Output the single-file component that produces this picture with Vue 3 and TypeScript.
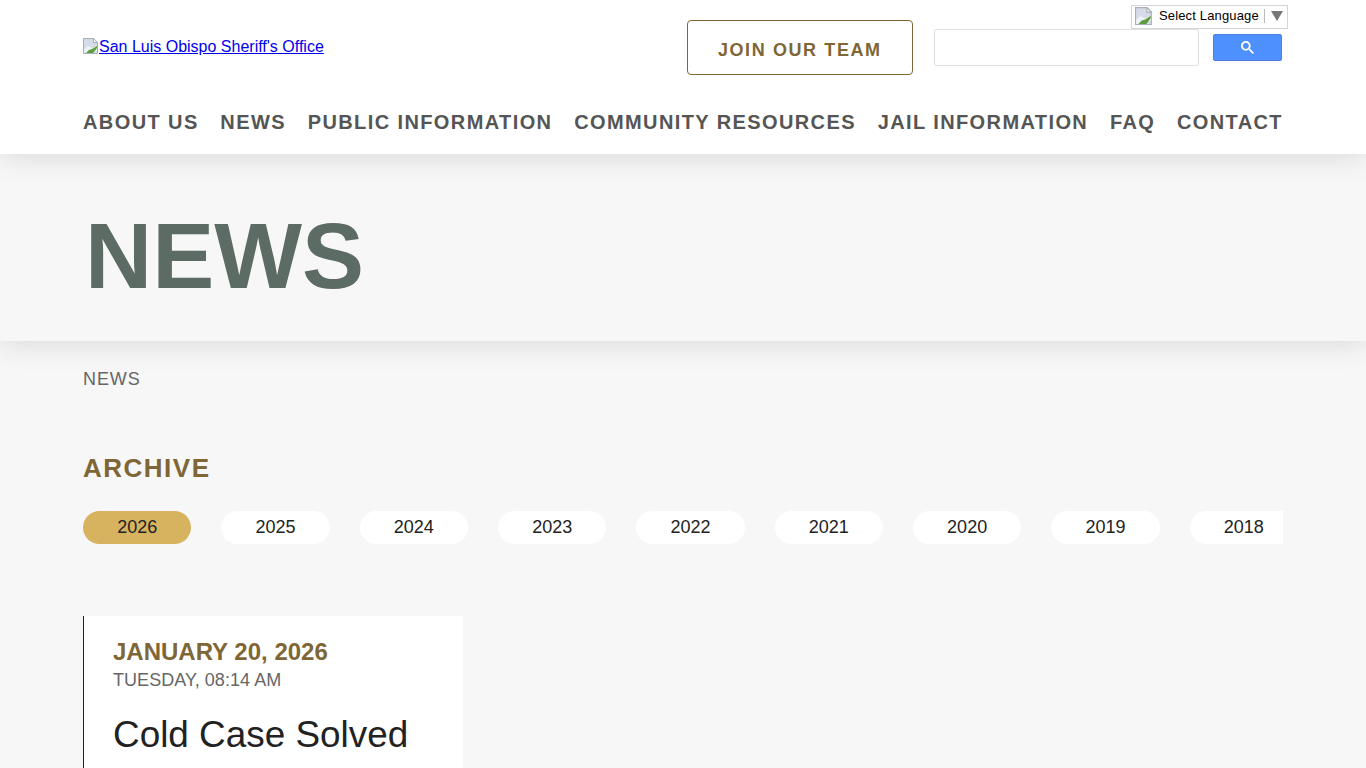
<script setup lang="ts">
const years = [2026, 2025, 2024, 2023, 2022, 2021, 2020, 2019, 2018];
const navItems = [
  "About Us",
  "News",
  "Public Information",
  "Community Resources",
  "Jail Information",
  "FAQ",
  "Contact",
];
</script>

<template>
  <header class="site-header">
    <div class="container">
      <div class="top-row">
        <a class="logo" href="#">
          <svg class="broken" width="16" height="16" viewBox="0 0 16 16">
            <path d="M.5 .5h10l4 4v11h-14z" fill="#d3dce8" stroke="#a8aeb8" />
            <path d="M10.5 .5v4h4z" fill="#fff" stroke="#a8aeb8" />
            <path d="M1 11l4-3 4 2 5-1v3l-8 3H1z" fill="#eef1f5" />
            <path d="M3 15l3-3 3-1 5-3v2l-4 5z" fill="#5c9e3f" />
          </svg>San Luis Obispo Sheriff's Office
        </a>
        <a class="join" href="#">JOIN OUR TEAM</a>
        <form class="search" @submit.prevent>
          <input type="text" aria-label="Search" />
          <button type="submit" aria-label="Search">
            <svg width="13" height="13" viewBox="0 0 13 13">
              <path
                fill="#fff"
                d="m4.8495 7.8226c0.82666 0 1.5262-0.29146 2.0985-0.87438 0.57232-0.58292 0.86378-1.2877 0.87438-2.1144 0.010599-0.82666-0.28086-1.5262-0.87438-2.0985-0.59352-0.57232-1.293-0.86378-2.0985-0.87438-0.8055-0.010599-1.5103 0.28086-2.1144 0.87438-0.60414 0.59352-0.8956 1.293-0.87438 2.0985 0.021197 0.8055 0.31266 1.5103 0.87438 2.1144 0.56172 0.60414 1.2665 0.8956 2.1144 0.87438zm4.4695 0.2115 3.681 3.6819-1.259 1.284-3.6817-3.7 0.0019784-0.69479-0.090043-0.098846c-0.87973 0.76087-1.92 1.1413-3.1207 1.1413-1.3553 0-2.5025-0.46363-3.4417-1.3909s-1.4088-2.0686-1.4088-3.4239c0-1.3553 0.4696-2.4966 1.4088-3.4239 0.9392-0.92727 2.0864-1.3969 3.4417-1.4088 1.3553-0.011889 2.4906 0.45771 3.406 1.4088 0.9154 0.95107 1.379 2.0924 1.3909 3.4239 0 1.2126-0.38043 2.2588-1.1413 3.1385l0.098834 0.090049z"
              />
            </svg>
          </button>
        </form>
        <div class="translate">
          <svg class="broken" width="18" height="18" viewBox="0 0 16 16">
            <path d="M.5 .5h10l4 4v11h-14z" fill="#d3dce8" stroke="#a8aeb8" />
            <path d="M10.5 .5v4h4z" fill="#fff" stroke="#a8aeb8" />
            <path d="M1 11l4-3 4 2 5-1v3l-8 3H1z" fill="#eef1f5" />
            <path d="M3 15l3-3 3-1 5-3v2l-4 5z" fill="#5c9e3f" />
          </svg>
          <span class="translate-label">Select Language</span>
          <span class="translate-arrow"></span>
        </div>
      </div>
      <nav class="main-nav">
        <a v-for="item in navItems" :key="item" href="#">{{ item }}</a>
      </nav>
    </div>
  </header>

  <section class="hero">
    <div class="container">
      <h1>NEWS</h1>
    </div>
  </section>

  <main class="container">
    <div class="crumb">NEWS</div>
    <h2 class="archive">ARCHIVE</h2>
    <div class="years">
      <button v-for="(y, i) in years" :key="y" :class="{ active: i === 0 }">{{ y }}</button>
    </div>
    <article class="card">
      <div class="date">JANUARY 20, 2026</div>
      <div class="time">TUESDAY, 08:14 AM</div>
      <h3>Cold Case Solved</h3>
    </article>
  </main>
</template>

<style>
html,
body {
  margin: 0;
  height: 768px;
  overflow: hidden;
  background: #f7f7f7;
}
</style>

<style scoped>
.container {
  width: 1200px;
  margin: 0 auto;
  font-family: "Liberation Sans", Arial, sans-serif;
}
.site-header {
  position: relative;
  z-index: 2;
  height: 154px;
  background: #fff;
  box-shadow: 0 0 30px rgba(0, 0, 0, 0.15);
}
.top-row {
  position: relative;
  display: flex;
  align-items: flex-start;
  height: 109px;
}
.logo {
  display: flex;
  align-items: flex-start;
  margin-top: 38px;
  font-size: 16px;
  line-height: 18px;
  color: #0000ee;
  text-decoration: underline;
}
.join {
  margin: 20px 0 0 363px;
  width: 226px;
  height: 55px;
  box-sizing: border-box;
  border: 1px solid #7f6636;
  border-radius: 4px;
  text-align: center;
  line-height: 58px;
  font-size: 18px;
  font-weight: 700;
  letter-spacing: 1.6px;
  color: #7f6636;
  text-decoration: none;
}
.search {
  display: flex;
  margin: 29px 0 0 21px;
}
.search input {
  width: 265px;
  height: 37px;
  box-sizing: border-box;
  border: 1px solid #dfe1e5;
  border-radius: 2px;
  outline: none;
}
.search button {
  margin: 5px 0 0 14px;
  width: 69px;
  height: 27px;
  padding: 0;
  display: flex;
  align-items: center;
  justify-content: center;
  border: 1px solid #4d7ee0;
  border-radius: 2px;
  background: #4d90fe;
}
.translate {
  position: absolute;
  top: 5px;
  right: -5px;
  width: 157px;
  height: 24px;
  box-sizing: border-box;
  display: flex;
  align-items: center;
  padding-left: 3px;
  padding-bottom: 2px;
  background: #fff;
  border: 1px solid #d5d5d5;
  font-size: 13px;
  color: #000;
}
.translate-label {
  margin-left: 6px;
  padding-right: 5px;
  border-right: 1px solid #bbb;
  line-height: 14px;
  letter-spacing: 0.15px;
}
.translate-arrow {
  margin-left: 6px;
  width: 0;
  height: 0;
  border-left: 6px solid transparent;
  border-right: 6px solid transparent;
  border-top: 10px solid #777;
}
.main-nav {
  display: flex;
  justify-content: space-between;
}
.main-nav a {
  font-size: 20px;
  line-height: 26px;
  font-weight: 700;
  letter-spacing: 1.4px;
  text-transform: uppercase;
  color: #555;
  text-decoration: none;
  white-space: nowrap;
}
.hero {
  position: relative;
  z-index: 1;
  height: 187px;
  background: #f7f7f7;
  box-shadow: 0 0 30px rgba(0, 0, 0, 0.15);
}
.hero h1 {
  margin: 0;
  padding: 47px 0 0 2px;
  font-size: 93px;
  line-height: 110px;
  font-weight: 700;
  color: #5c6b64;
}
.crumb {
  padding-top: 28px;
  font-size: 18px;
  line-height: 20px;
  letter-spacing: 0.9px;
  color: #666;
}
.archive {
  margin: 0;
  padding-top: 64px;
  font-size: 26px;
  line-height: 30px;
  letter-spacing: 1.5px;
  color: #7f6636;
}
.years {
  display: flex;
  gap: 30px;
  margin-top: 28px;
  overflow: hidden;
}
.years button {
  flex: 0 0 108.33px;
  height: 33px;
  padding: 0;
  border: none;
  border-radius: 17px;
  background: #fff;
  font-family: inherit;
  font-size: 18px;
  color: #222;
}
.years button.active {
  background: #d7b35f;
}
.card {
  margin-top: 72px;
  width: 380px;
  height: 300px;
  box-sizing: border-box;
  padding: 22px 29px;
  background: #fff;
  border-left: 1px solid #222;
}
.date {
  font-size: 24px;
  line-height: 28px;
  font-weight: 700;
  color: #7f6636;
}
.time {
  font-size: 18px;
  line-height: 28px;
  letter-spacing: 0.05px;
  color: #666;
}
.card h3 {
  margin: 19px 0 0;
  font-size: 36.9px;
  line-height: 44px;
  font-weight: 400;
  color: #222;
}
</style>
